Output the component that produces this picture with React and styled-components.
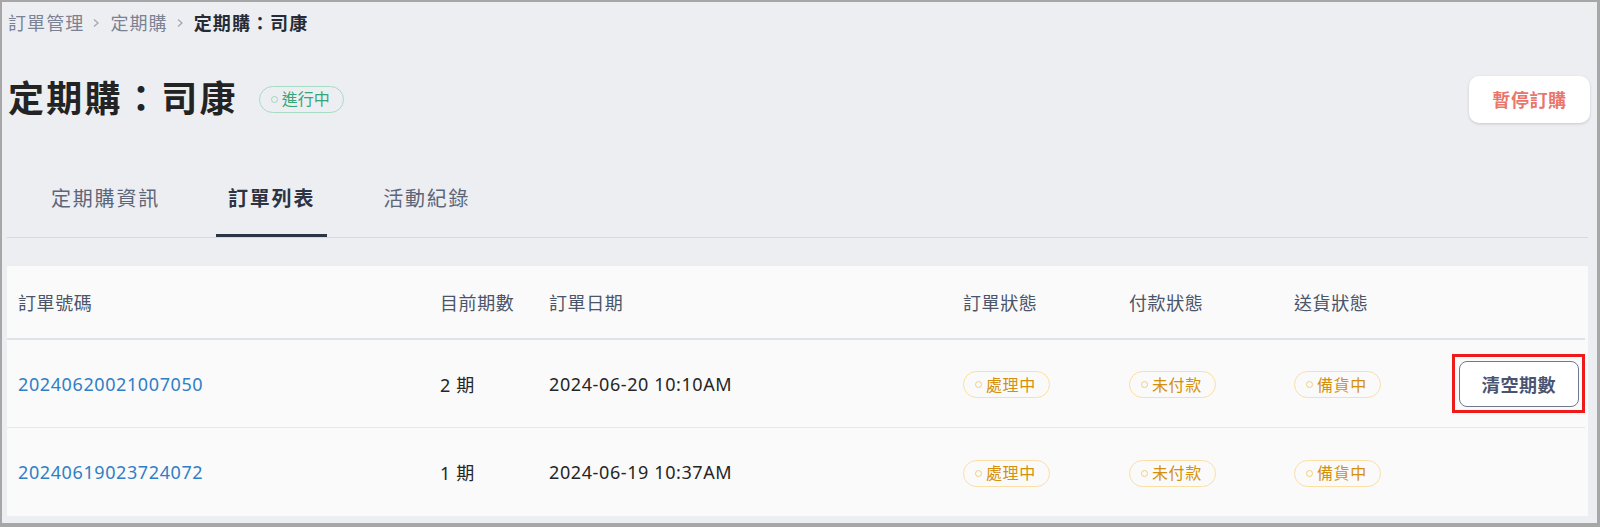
import React from 'react';
import styled, { createGlobalStyle } from 'styled-components';

const GlobalStyle = createGlobalStyle`
  body {
    margin: 0;
    font-family: "Noto Sans", "Noto Sans CJK TC", sans-serif;
  }
`;

const orders = [
  { id: '20240620021007050', period: '2 期', date: '2024-06-20 10:10AM', action: true },
  { id: '20240619023724072', period: '1 期', date: '2024-06-19 10:37AM', action: false },
];

const columns = ['訂單號碼', '目前期數', '訂單日期', '訂單狀態', '付款狀態', '送貨狀態', ''];

export default function App() {
  return (
    <>
      <GlobalStyle />
      <Frame>
        <Breadcrumb>
          <Crumb>訂單管理</Crumb>
          <Chevron />
          <Crumb>定期購</Crumb>
          <Chevron />
          <Crumb current>定期購：司康</Crumb>
        </Breadcrumb>

        <TitleRow>
          <TitleGroup>
            <Title>定期購：司康</Title>
            <Badge tone="green">
              <Dot tone="green" />
              進行中
            </Badge>
          </TitleGroup>
          <PauseButton>暫停訂購</PauseButton>
        </TitleRow>

        <TabBar>
          <Tab>定期購資訊</Tab>
          <Tab active>訂單列表</Tab>
          <Tab>活動紀錄</Tab>
        </TabBar>

        <Card>
          <HeadRow>
            {columns.map((c, i) => (
              <HeadCell key={i}>{c}</HeadCell>
            ))}
          </HeadRow>
          {orders.map((o, i) => (
            <Row key={o.id} last={i === orders.length - 1}>
              <Link>{o.id}</Link>
              <Cell>{o.period}</Cell>
              <Cell>{o.date}</Cell>
              <Cell>
                <Badge tone="amber">
                  <Dot tone="amber" />
                  處理中
                </Badge>
              </Cell>
              <Cell>
                <Badge tone="amber">
                  <Dot tone="amber" />
                  未付款
                </Badge>
              </Cell>
              <Cell>
                <Badge tone="amber">
                  <Dot tone="amber" />
                  備貨中
                </Badge>
              </Cell>
              <ActionCell>
                {o.action && (
                  <Highlight>
                    <ClearButton>清空期數</ClearButton>
                  </Highlight>
                )}
              </ActionCell>
            </Row>
          ))}
        </Card>
      </Frame>
    </>
  );
}

function Chevron() {
  return (
    <ChevronIcon width="8" height="10" viewBox="0 0 8 10">
      <polyline points="2,1.5 6,5 2,8.5" fill="none" stroke="#a3a9b5" strokeWidth="1.3" />
    </ChevronIcon>
  );
}

const tones = {
  green: { text: '#38a578', border: '#a6dcc4', dot: '#9fd6bd' },
  amber: { text: '#d4900c', border: '#fbdfa4', dot: '#f3cd7e' },
};

const Frame = styled.div`
  width: 1600px;
  height: 527px;
  box-sizing: border-box;
  border-style: solid;
  border-color: #a7a7a7;
  border-width: 2px 3px 4px 2px;
  background: #edeef1;
  padding: 9px 9px 0 5px;
  display: flex;
  flex-direction: column;
  overflow: hidden;
`;

const Breadcrumb = styled.div`
  display: flex;
  align-items: center;
  height: 24px;
  padding-left: 1px;
`;

const Crumb = styled.span`
  font-size: 18px;
  letter-spacing: 1.1px;
  line-height: 24px;
  color: ${p => (p.current ? '#262b36' : '#7a8294')};
  font-weight: ${p => (p.current ? 700 : 400)};
`;

const ChevronIcon = styled.svg`
  margin: 0 10px 0 8px;
`;

const TitleRow = styled.div`
  margin-top: 40px;
  height: 48px;
  display: flex;
  align-items: center;
  justify-content: space-between;
  margin-right: -2px;
`;

const TitleGroup = styled.div`
  display: flex;
  align-items: center;
  padding-left: 1px;
`;

const Title = styled.h1`
  margin: 0 21px 0 0;
  font-size: 36px;
  line-height: 48px;
  letter-spacing: 2.3px;
  font-weight: 700;
  color: #232323;
`;

const Badge = styled.span`
  display: inline-flex;
  align-items: center;
  box-sizing: border-box;
  height: 27px;
  padding: 0 13px 0 11px;
  border: 1.5px solid ${p => tones[p.tone].border};
  border-radius: 14px;
  font-size: 16px;
  color: ${p => tones[p.tone].text};
  line-height: 1;
`;

const Dot = styled.span`
  width: 5px;
  height: 5px;
  border-radius: 50%;
  border: 1.2px solid ${p => tones[p.tone].dot};
  margin-right: 4px;
`;

const PauseButton = styled.button`
  width: 121px;
  height: 47px;
  border: none;
  border-radius: 10px;
  background: #ffffff;
  box-shadow: 0 1px 3px rgba(0, 0, 0, 0.16);
  font-family: inherit;
  font-size: 18px;
  letter-spacing: 0.6px;
  font-weight: 700;
  color: #e8766b;
`;

const TabBar = styled.div`
  margin-top: 50px;
  display: flex;
  gap: 44px;
  padding-left: 32px;
  border-bottom: 1px solid #d4dae3;
`;

const Tab = styled.div`
  padding: 12px 12px 21px;
  font-size: 20px;
  line-height: 28px;
  letter-spacing: 1.8px;
  color: ${p => (p.active ? '#2b3344' : '#5c667a')};
  font-weight: ${p => (p.active ? 700 : 400)};
  border-bottom: 3px solid ${p => (p.active ? '#2c3546' : 'transparent')};
`;

const Card = styled.div`
  margin-top: 28px;
  background: #fafafa;
  padding-right: 3px;
`;

const grid = `
  display: grid;
  grid-template-columns: 422px 109px 414px 166px 165px 1fr auto;
  align-items: center;
  padding-left: 11px;
`;

const HeadRow = styled.div`
  ${grid}
  height: 72px;
  border-bottom: 2px solid #dfe3ea;
`;

const HeadCell = styled.div`
  font-size: 18px;
  letter-spacing: 0.6px;
  color: #4b5569;
`;

const Row = styled.div`
  ${grid}
  height: ${p => (p.last ? '88px' : '87px')};
  border-bottom: ${p => (p.last ? 'none' : '1px solid #e6e8ee')};
`;

const Cell = styled.div`
  font-size: 18px;
  letter-spacing: 0.6px;
  color: #262626;
`;

const Link = styled(Cell)`
  color: #2f7fc6;
`;

const ActionCell = styled.div`
  display: flex;
  justify-content: flex-end;
`;

const Highlight = styled.div`
  border: 3px solid #ee1b1b;
  padding: 4px 3px 3px 4px;
`;

const ClearButton = styled.button`
  width: 120px;
  height: 46px;
  border: 1.5px solid #6f7891;
  border-radius: 8px;
  background: #ffffff;
  font-family: inherit;
  font-size: 18px;
  letter-spacing: 0.6px;
  font-weight: 700;
  color: #4a5471;
`;
